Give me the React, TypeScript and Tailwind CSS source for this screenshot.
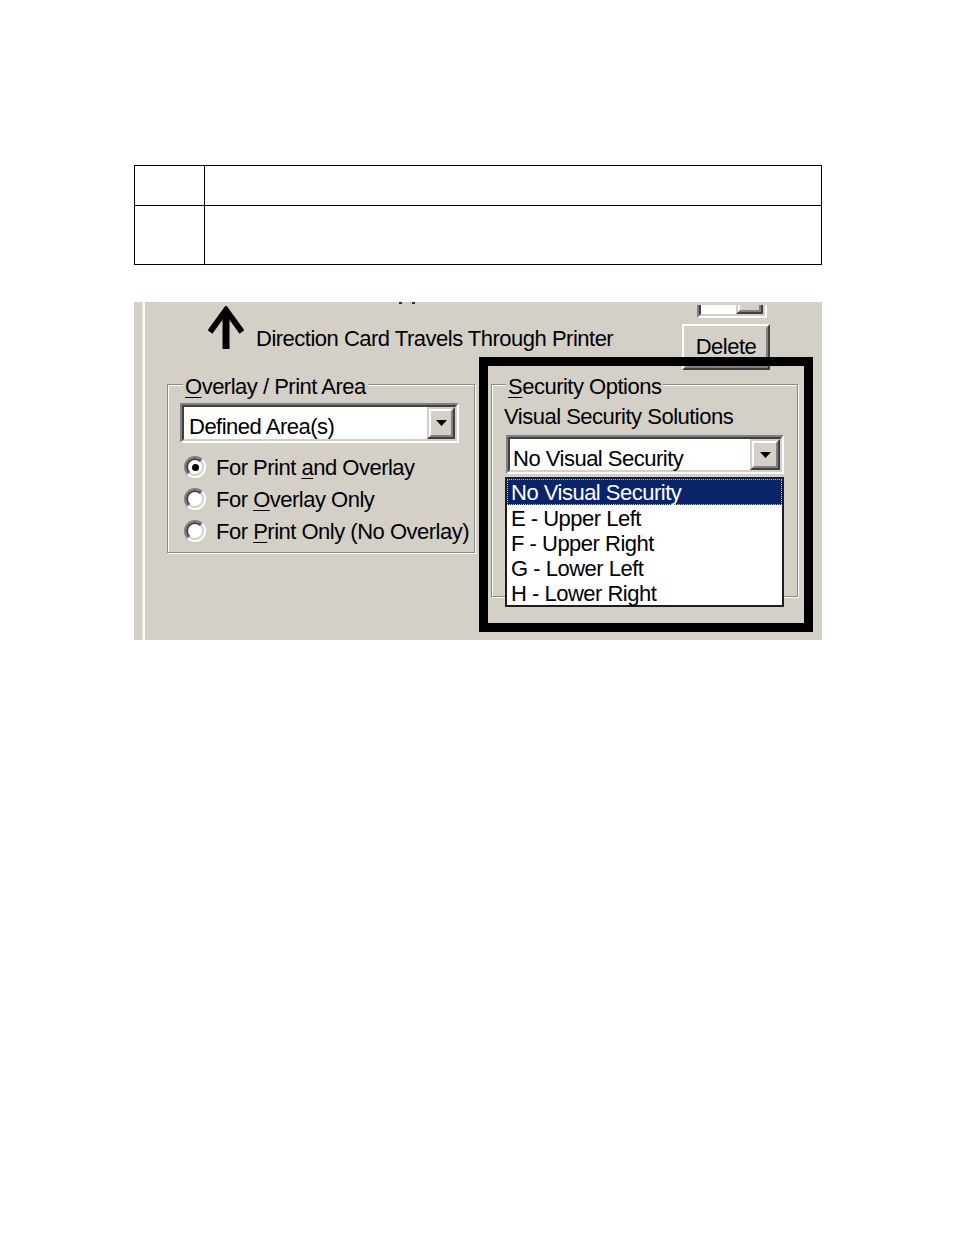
import type { ReactNode } from "react";

const FONT = "font-['Liberation_Sans',Arial,sans-serif]";

// Classic raised drop-down button
const DropButton = ({ small }: { small?: boolean }) => (
  <div className="h-full w-full border-2 border-t-[#d4d0c8] border-l-[#d4d0c8] border-r-[#404040] border-b-[#404040]">
    <div className="flex h-full w-full items-center justify-center border-2 border-t-white border-l-white border-r-[#808080] border-b-[#808080] bg-[#d4d0c8]">
      {small ? (
        <svg width="6" height="4" viewBox="0 0 6 4">
          <path d="M0 0h6L3 4z" fill="#000" />
        </svg>
      ) : (
        <svg width="11" height="6" viewBox="0 0 11 6">
          <path d="M0 0h11L5.5 6z" fill="#000" />
        </svg>
      )}
    </div>
  </div>
);

const Mn = ({ children }: { children: ReactNode }) => (
  <span className="underline decoration-1 underline-offset-[3px]">{children}</span>
);

const Radio = ({ checked, children }: { checked?: boolean; children: ReactNode }) => (
  <div className="flex h-[32px] items-center">
    <div className="ml-[4px] h-[22px] w-[22px] shrink-0 rounded-full border-2 border-t-[#808080] border-l-[#808080] border-r-white border-b-white">
      <div className="flex h-full w-full items-center justify-center rounded-full border-2 border-t-[#404040] border-l-[#404040] border-r-[#d4d0c8] border-b-[#d4d0c8] bg-white">
        {checked && <div className="h-[7px] w-[7px] rounded-full bg-black" />}
      </div>
    </div>
    <span className="ml-[10px] mt-[2px] whitespace-nowrap">{children}</span>
  </div>
);

const LIST_ITEMS = ["E - Upper Left", "F - Upper Right", "G - Lower Left", "H - Lower Right"];

export default function App() {
  return (
    <div className="min-h-screen bg-white pt-[165px]">
      {/* Empty two-row table */}
      <table className="ml-[134px] w-[688px] border-collapse">
        <tbody>
          <tr className="h-[40px]">
            <td className="w-[70px] border border-black" />
            <td className="border border-black" />
          </tr>
          <tr className="h-[59px]">
            <td className="w-[70px] border border-black" />
            <td className="border border-black" />
          </tr>
        </tbody>
      </table>

      {/* Dialog screenshot */}
      <div
        className={`relative ml-[134px] mt-[37px] flex h-[338px] w-[688px] overflow-hidden bg-[#d4d0c8] text-[22px] leading-[26px] tracking-[-0.5px] text-black ${FONT}`}
      >
        <div className="w-[8px] shrink-0" />
        <div className="w-px shrink-0 bg-[#e4e1db]" />
        <div className="w-[2px] shrink-0 bg-[#fbfaf7]" />

        <div className="flex flex-1 flex-col">
          {/* clipped glyph bits at the very top */}
          <div className="flex h-[3px]">
            <span className="ml-[254px] h-[2px] w-[3px] bg-[#333]" />
            <span className="ml-[10px] h-[2px] w-[3px] bg-[#333]" />
          </div>

          {/* Top row */}
          <div className="flex h-[79px] items-start">
            <svg className="ml-[63px] mt-[1px] shrink-0" width="36" height="44" viewBox="0 0 36 44">
              <polyline points="2,26 18,4 34,26" fill="none" stroke="#000" strokeWidth="6" strokeLinejoin="miter" />
              <line x1="18" y1="4" x2="18" y2="43" stroke="#000" strokeWidth="7" />
            </svg>
            <span className="ml-[12px] mt-[21px] whitespace-nowrap">Direction Card Travels Through Printer</span>

            <div className="ml-auto mr-[52px] flex flex-col items-end">
              <div className="mr-[3px] flex h-[13px] items-end overflow-hidden">
                <div className="h-[32px] w-[70px] shrink-0 border-2 border-t-[#808080] border-l-[#808080] border-r-white border-b-white">
                  <div className="flex h-full w-full justify-end border-2 border-t-[#404040] border-l-[#404040] border-r-[#d4d0c8] border-b-[#d4d0c8] bg-white">
                    <div className="h-full w-[27px]">
                      <DropButton small />
                    </div>
                  </div>
                </div>
              </div>
              <div className="mt-[6px] h-[46px] w-[88px] border-2 border-t-white border-l-white border-r-[#404040] border-b-[#404040]">
                <div className="flex h-full w-full justify-center border-2 border-t-[#d4d0c8] border-l-[#d4d0c8] border-r-[#808080] border-b-[#808080] pt-[6px]">
                  Delete
                </div>
              </div>
            </div>
          </div>

          {/* Group boxes */}
          <div className="ml-[22px] flex items-start">
            {/* Overlay / Print Area */}
            <div className="relative h-[169px] w-[308px] shrink-0 border border-[#8d8a84] pl-[12px] pt-[18px] shadow-[inset_1px_1px_0_#fff,1px_1px_0_#fff]">
              <span className="absolute left-[15px] top-[-11px] whitespace-nowrap bg-[#d4d0c8] px-[2px]">
                <Mn>O</Mn>verlay / Print Area
              </span>
              <div className="h-[40px] w-[279px] border-2 border-t-[#808080] border-l-[#808080] border-r-white border-b-white">
                <div className="flex h-full w-full border-2 border-t-[#404040] border-l-[#404040] border-r-[#d4d0c8] border-b-[#d4d0c8] bg-white">
                  <span className="mt-[7px] flex-1 whitespace-nowrap pl-[5px]">Defined Area(s)</span>
                  <div className="h-full w-[28px] shrink-0">
                    <DropButton />
                  </div>
                </div>
              </div>
              <div className="mt-[8px] flex flex-col">
                <Radio checked>
                  For Print <Mn>a</Mn>nd Overlay
                </Radio>
                <Radio>
                  For <Mn>O</Mn>verlay Only
                </Radio>
                <Radio>
                  For <Mn>P</Mn>rint Only (No Overlay)
                </Radio>
              </div>
            </div>

            {/* Security Options */}
            <div className="relative ml-[16px] h-[213px] w-[307px] shrink-0 border border-[#8d8a84] pl-[12px] pt-[18px] shadow-[inset_1px_1px_0_#fff,1px_1px_0_#fff]">
              <span className="absolute left-[14px] top-[-11px] whitespace-nowrap bg-[#d4d0c8] px-[2px]">
                <Mn>S</Mn>ecurity Options
              </span>
              <div className="mt-[1px] whitespace-nowrap">Visual Security Solutions</div>
              <div className="ml-[2px] mt-[5px] h-[39px] w-[278px] border-2 border-t-[#808080] border-l-[#808080] border-r-white border-b-white">
                <div className="flex h-full w-full border-2 border-t-[#404040] border-l-[#404040] border-r-[#d4d0c8] border-b-[#d4d0c8] bg-white">
                  <span className="mt-[7px] flex-1 whitespace-nowrap pl-[3px]">No Visual Security</span>
                  <div className="h-full w-[30px] shrink-0">
                    <DropButton />
                  </div>
                </div>
              </div>

              {/* Open drop-down list */}
              <div className="ml-[1px] mt-[3px] flex h-[130px] w-[279px] flex-col border-2 border-[#1e1e1e] bg-white">
                <div className="h-[26px] whitespace-nowrap border border-dotted border-[#d9c77a] bg-[#0a246a] pl-[3px] leading-[26px] text-white">
                  No Visual Security
                </div>
                {LIST_ITEMS.map((item) => (
                  <div key={item} className="h-[25px] whitespace-nowrap pl-[4px] leading-[27px]">
                    {item}
                  </div>
                ))}
              </div>
            </div>
          </div>
        </div>

        {/* Highlight frame drawn over the screenshot */}
        <div className="pointer-events-none absolute left-[345px] top-[55px] h-[275px] w-[334px] border-[9px] border-black" />
      </div>
    </div>
  );
}
